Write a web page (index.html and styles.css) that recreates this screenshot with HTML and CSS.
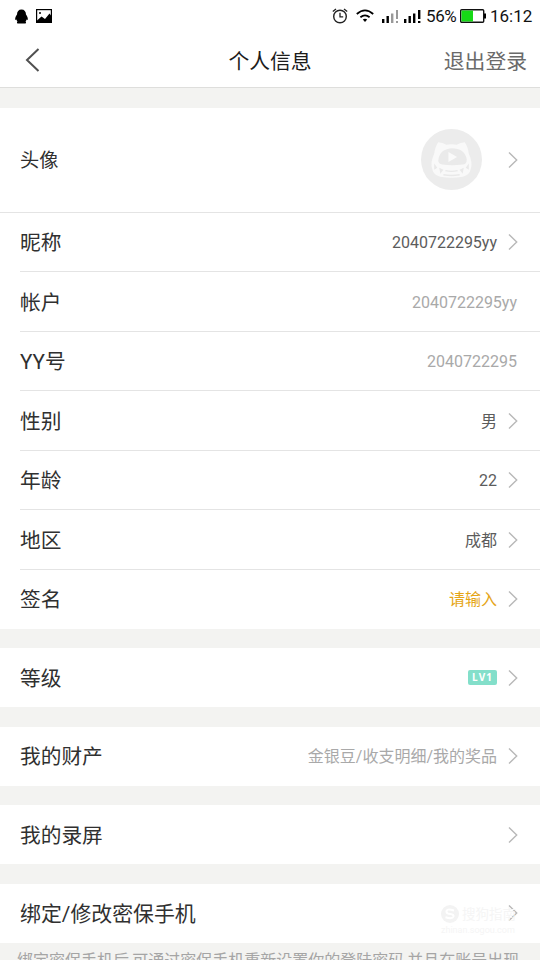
FILE: index.html
```html
<!DOCTYPE html>
<html lang="zh-CN">
<head>
<meta charset="utf-8">
<title>个人信息</title>
<link rel="stylesheet" href="styles.css">
</head>
<body>
<svg class="defs" aria-hidden="true">
  <symbol id="chevron" viewBox="0 0 10 18"><path d="M1 1.500 8.700 9 1 16.500" fill="none" stroke="#b8b8b8" stroke-width="1.400"/></symbol>
</svg>
<div class="status">
  <svg class="penguin" viewBox="0 0 13 15"><path d="M6.500.5C3.600.5 2 2.500 2 5.500.8 7.200 0 9 .2 10.500c.2.700.8.500 1.300 0 .2.900.5 1.500 1 2-.8.500-.7 1.700.2 2h7.600c.9-.3 1-1.500.2-2 .5-.5.8-1.100 1-2 .5.500 1.100.700 1.300 0 .2-1.500-.6-3.300-1.800-5C11 2.500 9.400.5 6.500.5Z"/></svg>
  <svg class="photo" viewBox="0 0 16 14"><rect x=".6" y=".6" width="14.800" height="12.800" fill="none" stroke="#000" stroke-width="1.200"/><path d="M1 13V11.500L5.500 7.500 9 10l4.500-5.500L15 6.500V13Z"/><circle cx="4" cy="4" r="1"/></svg>
  <div class="status-right">
    <svg class="alarm" viewBox="0 0 16 16"><circle cx="8" cy="8.500" r="6.300" fill="none" stroke="#222" stroke-width="1.400"/><path d="M8 4.800v4h3.200M.8 3.600 4 1M15.200 3.600 12 1" fill="none" stroke="#222" stroke-width="1.300"/></svg>
    <svg class="wifi" viewBox="0 0 18 14"><path d="M.8 5Q9-2.200 17.200 5M4.400 8.300q4.600-3.800 9.200 0" fill="none" stroke="#000" stroke-width="1.800"/><path d="M6.800 10.500q2.200-1.600 4.400 0L9 13Z"/></svg>
    <svg class="signal first" viewBox="0 0 17 13"><path d="M0 9h2.400v4H0zM4.500 6h2.400v7H4.500z"/><path d="M9 3.500h2.400V13H9zM14 0h2v9h-2zM14 11h2v2h-2z" fill="#999"/></svg>
    <svg class="signal second" viewBox="0 0 17 13"><path d="M0 9h2.400v4H0zM4.500 6h2.400v7H4.500zM9 3.500h2.400V13H9zM14 0h2.400v9H14zM14 11h2.400v2H14z"/></svg>
    <span class="percent">56%</span>
    <svg class="battery" viewBox="0 0 26 14"><rect x=".7" y=".7" width="23" height="12.600" rx="1" fill="#fff" stroke="#111" stroke-width="1.400"/><path d="M1.500 1.500H13v11H1.500z" fill="#16d916"/><path d="M24 4.500h2v5h-2z"/></svg>
    <span class="time">16:12</span>
  </div>
</div>
<header class="header">
  <svg class="back" viewBox="0 0 15 26"><path d="M13.500 2 2 13l11.500 11" fill="none" stroke="#505050" stroke-width="2"/></svg>
  <h1 class="title">个人信息</h1>
  <span class="logout">退出登录</span>
</header>
<main>
  <section class="group">
    <div class="row row-avatar">
      <span class="label">头像</span>
      <svg class="avatar" viewBox="0 0 60 60">
        <circle cx="30" cy="30" r="30" fill="#ececec"/>
        <path d="M13 24Q14 17 17 13q4 0 8 2.500 5-1 10 0 4-2.500 8-2.500 3 4 4 11 4 9 2 15-1 6-8 8-11 2-22 0-7-2-8-8-2-6 2-15Z" fill="#f9f9f9"/>
        <path d="M17 31q1-11 13-12 13 0 15 11 0 5-4 5-11 1.500-20 0-4-.5-4-4Z" fill="#eaeaea"/>
        <path d="m27 22.500 8.500 5-8.500 5Z" fill="#fafafa"/>
        <path d="m13 34 3 4-3 2ZM18 38l4 2-3 4ZM47 34l-3 4 3 2ZM42 38l-4 2 3 4Z" fill="#e9e9e9"/>
        <path d="M24 41q6 1.500 12 0M22 45q8 1.500 16 0" fill="none" stroke="#e9e9e9" stroke-width="1.300"/>
      </svg>
      <svg class="chev"><use href="#chevron"/></svg>
    </div>
    <div class="row first-line"><span class="label">昵称</span><span class="value">2040722295yy</span><svg class="chev"><use href="#chevron"/></svg></div>
    <div class="row"><span class="label">帐户</span><span class="value muted plain">2040722295yy</span></div>
    <div class="row"><span class="label">YY号</span><span class="value muted plain">2040722295</span></div>
    <div class="row"><span class="label">性别</span><span class="value">男</span><svg class="chev"><use href="#chevron"/></svg></div>
    <div class="row"><span class="label">年龄</span><span class="value">22</span><svg class="chev"><use href="#chevron"/></svg></div>
    <div class="row"><span class="label">地区</span><span class="value">成都</span><svg class="chev"><use href="#chevron"/></svg></div>
    <div class="row"><span class="label">签名</span><span class="value prompt">请输入</span><svg class="chev"><use href="#chevron"/></svg></div>
  </section>
  <section class="group"><div class="row"><span class="label">等级</span><span class="level">LV1</span><svg class="chev"><use href="#chevron"/></svg></div></section>
  <section class="group"><div class="row"><span class="label">我的财产</span><span class="value muted">金银豆/收支明细/我的奖品</span><svg class="chev"><use href="#chevron"/></svg></div></section>
  <section class="group"><div class="row"><span class="label">我的录屏</span><svg class="chev"><use href="#chevron"/></svg></div></section>
  <section class="group"><div class="row"><span class="label wide">绑定/修改密保手机</span><svg class="chev"><use href="#chevron"/></svg>
    <div class="watermark">
      <svg class="mark" viewBox="0 0 18 18"><circle cx="9" cy="9" r="9" fill="#f3f3f3"/><path d="M13 5.500Q5 3 5.500 7q.5 2 4 2 3.500.5 3 2.500-1 3-8 .8" fill="none" stroke="#fff" stroke-width="2"/></svg>
      <span class="mark-name">搜狗指南</span>
      <span class="mark-url">zhinan.sogou.com</span>
    </div>
  </div></section>
  <p class="note">绑定密保手机后,可通过密保手机重新设置你的登陆密码,并且在账号出现</p>
</main>
</body>
</html>
```

FILE: styles.css
```css
* { box-sizing: border-box; }
body {
  margin: 0;
  height: 960px;
  overflow: hidden;
  background: #f3f3f1;
  color: #303030;
  font-family: Roboto, "Noto Sans CJK SC", sans-serif;
}
.defs { position: absolute; width: 0; height: 0; }
svg { display: block; flex: none; }
.status {
  display: flex;
  align-items: center;
  height: 32px;
  padding: 0 8px 0 15px;
  background: #fff;
  color: #111;
}
.penguin { width: 13px; height: 15px; }
.photo { width: 16px; height: 14px; margin-left: 8px; }
.status-right { display: flex; align-items: center; margin-left: auto; }
.alarm { width: 16px; height: 16px; }
.wifi { width: 18px; height: 14px; margin-left: 8px; }
.signal { width: 17px; height: 13px; }
.signal.first { margin-left: 8px; }
.signal.second { margin-left: 5px; }
.percent { width: 32px; margin-left: 5px; font-size: 17px; line-height: 20px; letter-spacing: -0.4px; white-space: nowrap; }
.battery { width: 26px; height: 14px; margin-left: 2px; }
.time { width: 42px; margin-left: 4px; font-size: 17px; line-height: 20px; white-space: nowrap; }
.header {
  display: grid;
  grid-template-columns: 1fr auto 1fr;
  align-items: center;
  height: 56px;
  padding: 0 13px 0 25px;
  background: #fff;
  border-bottom: 1px solid #dededc;
}
.back { width: 15px; height: 26px; }
.title { margin: 0 12px 0 0; font-size: 20.800px; font-weight: 400; color: #1c1c1c; }
.logout { justify-self: end; font-size: 20.800px; color: #6a6a6a; }
.group { margin-top: 20px; background: #fff; }
.group:first-child { padding-bottom: 0.600px; }
.group + .group { margin-top: 19.300px; }
.row {
  position: relative;
  display: flex;
  align-items: center;
  height: 59.500px;
  padding-right: 22px;
  margin-left: 20px;
}
.group + .group .row { height: 59.200px; }
.row + .row { border-top: 1px solid #e4e4e4; }
.row-avatar { height: 103.900px; }
.row + .first-line { margin-left: 0; padding-left: 20px; }
.label { flex: 1; padding-top: 2px; font-size: 20.700px; line-height: 30px; }
.label.wide { font-size: 20.900px; }
.row-avatar .label { padding-top: 3px; font-size: 19.200px; }
.value { padding-top: 2px; font-size: 16px; line-height: 24px; color: #5c5c5c; }
.value.muted { color: #a9a9a9; }
.value.plain { margin-right: 1px; }
.value.prompt { color: #e5a516; }
.value + .chev, .level + .chev { margin-left: 11px; }
.chev { width: 10px; height: 18px; }
.avatar { width: 61px; height: 61px; margin-right: 26px; }
.level {
  width: 29px;
  height: 15px;
  border-radius: 2px;
  background: #83dfca;
  color: #fff;
  font: 700 10px/15px "Open Sans", sans-serif;
  letter-spacing: 1px;
  text-align: center;
}
.watermark {
  position: absolute;
  top: 21px;
  right: 24px;
  display: grid;
  grid-template-columns: 18px auto;
  column-gap: 3px;
  color: #f5f5f5;
}
.mark { width: 18px; height: 18px; }
.mark-name { font-size: 13.500px; line-height: 18px; }
.mark-url { grid-column: 1 / 3; font-size: 9px; line-height: 14px; }
.note {
  margin: 5px 0 0 17px;
  color: #a5a5a5;
  font-size: 16px;
  line-height: 26px;
  white-space: nowrap;
}
```
